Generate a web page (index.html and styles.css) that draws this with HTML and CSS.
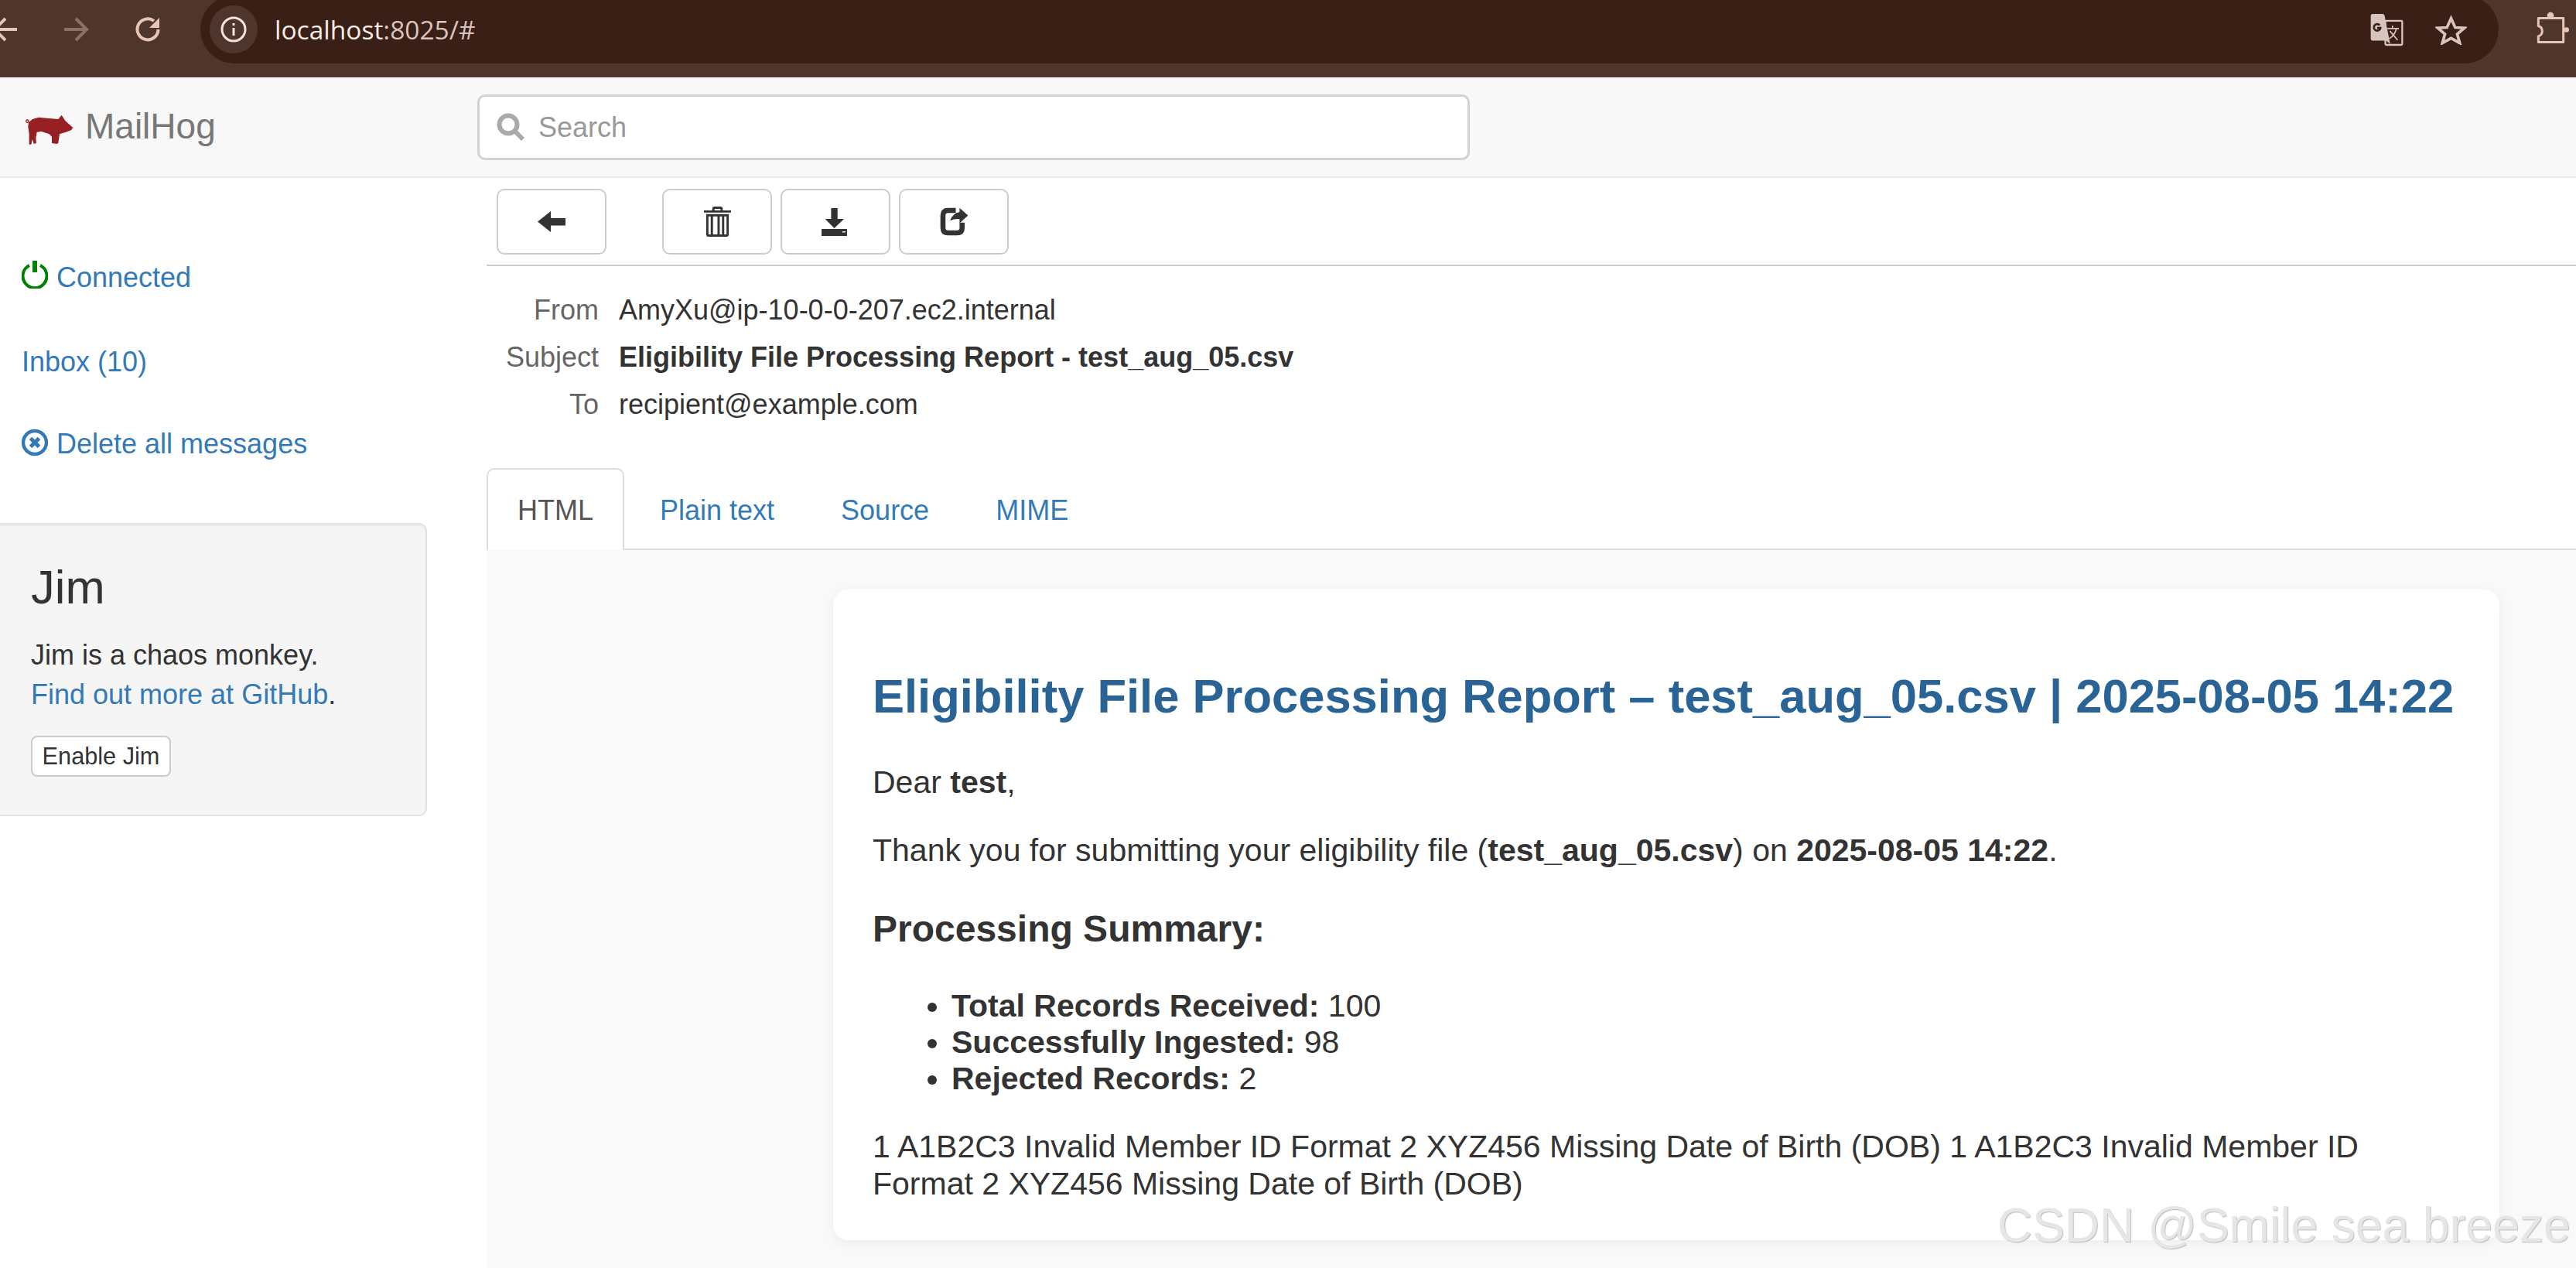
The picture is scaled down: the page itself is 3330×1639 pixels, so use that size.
FILE: index.html
```html
<!DOCTYPE html>
<html lang="en">
<head>
<meta charset="utf-8">
<title>MailHog</title>
<link rel="stylesheet" href="styles.css">
</head>
<body>
<header class="chrome">
  <svg class="nav-icon back" viewBox="0 0 32 32"><path d="M32 16H3M17 2 3 16l14 14"/></svg>
  <svg class="nav-icon fwd" viewBox="0 0 32 32"><path d="M0 16h29M15 2l14 14-14 14"/></svg>
  <svg class="nav-icon reload" viewBox="0 0 32 32"><path d="M29.500 16A13.500 13.500 0 1 1 24 5"/><path class="solid" d="M31 1v13H18z"/></svg>
  <div class="omnibox">
    <span class="site-pill"><svg class="info" viewBox="0 0 34 34"><circle cx="17" cy="17" r="15"/><path d="M17 15v10M17 9v3"/></svg></span>
    <span class="url">localhost<span class="url-dim">:8025/#</span></span>
    <svg class="translate" viewBox="48 36 130 128">
      <rect class="t-outline" x="107" y="65" width="66" height="94" rx="4"/>
      <path class="t-fill" d="M58 38h38q6 0 8 6l22 112-16-14H58q-8 0-8-8V46q0-8 8-8z"/>
      <path class="t-g" d="M85 82a13 13 0 1 0 3 11H75"/>
      <path class="t-x" d="M115 95h45M135 84v11M150 97c-5 18-14 30-28 38M125 105l30 35"/>
    </svg>
    <svg class="star" viewBox="298 40 122 118"><path d="M359 54l16 36 36 2-28 24 10 35-34-19-34 19 10-35-28-24 36-2z"/></svg>
  </div>
  <svg class="puzzle" viewBox="685 30 132 128">
    <path class="puzzle-body" d="M695 55H792V148H695V125C715 118 715 92 695 85Z"/>
    <circle cx="742" cy="45" r="13"/>
    <circle cx="804" cy="100" r="10"/>
  </svg>
</header>
<nav class="navbar">
  <a class="brand">
    <svg class="pig" viewBox="38 24 186 120"><circle class="pig-tail" cx="45" cy="50" r="5"/><path d="M50 55 65 42l25-7 30 3 45 4 13-16 14 22 13 12 17 15-7 10-20 7-25 8-5 35-7 3-18-3v-25l-10-10-30-10-18 2-4 23 2 20-10 3-5-18-5 20h-8v-40l-4-30z"/></svg>
    <span>MailHog</span>
  </a>
  <div class="search">
    <svg class="search-icon" viewBox="0 0 38 38"><circle cx="15" cy="15" r="11.500"/><path d="M23 23l11 11"/></svg>
    <span class="placeholder">Search</span>
  </div>
</nav>
<main class="layout">
  <aside class="sidebar">
    <a class="side-link side-first">
      <svg class="side-icon power" viewBox="0 0 34 36"><path d="M10 6A15.500 15.500 0 1 0 24 6"/><path d="M17 0v15" class="power-bar"/></svg>Connected
    </a>
    <a class="side-link side-inbox">Inbox (10)</a>
    <a class="side-link side-delete">
      <svg class="side-icon remove" viewBox="0 0 34 36"><circle cx="17" cy="18" r="15"/><path d="M11.500 12.500l11 11M22.500 12.500l-11 11"/></svg>Delete all messages
    </a>
    <section class="jim">
      <h3>Jim</h3>
      <p>Jim is a chaos monkey.<br><a>Find out more at GitHub</a>.</p>
      <button class="jim-btn">Enable Jim</button>
    </section>
  </aside>
  <section class="content">
    <div class="toolbar">
      <button class="tool tool-back"><svg class="ico-back" viewBox="0 0 36 27"><path d="M0 13.500 17 0v9h19v9.500H17V27z"/></svg></button>
      <button class="tool"><svg class="ico-trash" viewBox="0 0 36 40"><path fill-rule="evenodd" d="M11 5V3q0-3 3-3h8q3 0 3 3v2h11v3H0V5zm3-2v2h8V3zM3 10h30v27q0 3-3 3H6q-3 0-3-3zm3 3v24h3V13zm6 0v24h3V13zm9 0v24h3V13zm6 0v24h3V13zm-12 0v24h3V13z"/></svg></button>
      <button class="tool"><svg class="ico-download" viewBox="0 0 33 36"><path fill-rule="evenodd" d="M12.400 0h8.300v14H29L16.500 26 4.600 14h7.800zM0 27h33v9H0zm27 3v1.500h4V30z"/></svg></button>
      <button class="tool"><svg class="ico-share" viewBox="68 40 112 112"><path class="share-box" d="M130 52H100Q80 52 80 72V120Q80 140 100 140H135Q155 140 155 120V100"/><path d="M145 42 178 72 145 102V86Q125 84 108 92 118 62 145 58Z"/></svg></button>
    </div>
    <dl class="meta">
      <div class="meta-row"><dt>From</dt><dd>AmyXu@ip-10-0-0-207.ec2.internal</dd></div>
      <div class="meta-row"><dt>Subject</dt><dd class="strong">Eligibility File Processing Report - test_aug_05.csv</dd></div>
      <div class="meta-row"><dt>To</dt><dd>recipient@example.com</dd></div>
    </dl>
    <ul class="tabs">
      <li class="tab active">HTML</li>
      <li class="tab">Plain text</li>
      <li class="tab">Source</li>
      <li class="tab">MIME</li>
    </ul>
    <div class="preview">
      <article class="card">
        <h1>Eligibility File Processing Report – test_aug_05.csv | 2025-08-05 14:22</h1>
        <p>Dear <b>test</b>,</p>
        <p>Thank you for submitting your eligibility file (<b>test_aug_05.csv</b>) on <b>2025-08-05 14:22</b>.</p>
        <h2>Processing Summary:</h2>
        <ul class="summary">
          <li><b>Total Records Received:</b> 100</li>
          <li><b>Successfully Ingested:</b> 98</li>
          <li><b>Rejected Records:</b> 2</li>
        </ul>
        <p class="rows">1 A1B2C3 Invalid Member ID Format 2 XYZ456 Missing Date of Birth (DOB) 1 A1B2C3 Invalid Member ID Format 2 XYZ456 Missing Date of Birth (DOB)</p>
      </article>
    </div>
  </section>
</main>
<div class="watermark">CSDN @Smile sea breeze</div>
</body>
</html>
```
FILE: styles.css
```css
* { box-sizing: border-box; }
html, body { margin: 0; height: 100%; overflow: hidden; }
body {
  position: relative;
  width: 3330px;
  height: 1639px;
  background: #fff;
  color: #333;
  font-family: "Liberation Sans", Arial, sans-serif;
  font-size: 36px;
  line-height: 51px;
  display: flex;
  flex-direction: column;
}
a { color: #337ab7; text-decoration: none; }

/* browser chrome */
.chrome {
  height: 100px;
  flex: none;
  background: #4f362c;
  display: flex;
  align-items: flex-start;
  overflow: hidden;
}
.nav-icon { flex: none; width: 32px; height: 32px; margin-top: 22px; fill: none; stroke: #e9c5b6; stroke-width: 4; }
.nav-icon .solid { fill: #e9c5b6; stroke: none; }
.back { margin-left: -10px; }
.fwd { margin-left: 61px; stroke: #8c7166; }
.reload { margin-left: 60px; }
.omnibox {
  flex: none;
  width: 2971px;
  height: 88px;
  margin: -6px 0 0 52px;
  background: #3a1f16;
  border-radius: 44px;
  display: flex;
  align-items: center;
  padding-left: 12px;
}
.site-pill {
  width: 62px;
  height: 62px;
  border-radius: 50%;
  background: #4f362c;
  display: flex;
  align-items: center;
  justify-content: center;
  flex: none;
}
.info { width: 34px; height: 34px; fill: none; stroke: #f3e4de; stroke-width: 3; }
.url {
  font-family: "Open Sans", "Noto Sans", sans-serif;
  font-size: 33.500px;
  line-height: 40px;
  color: #f6ebe6;
  margin-left: 22px;
}
.url-dim { color: #d8c5bd; }
.translate { width: 43px; height: 43px; margin-left: auto; flex: none; }
.t-outline { fill: none; stroke: #d7c4be; stroke-width: 7; }
.t-fill { fill: #d7c4be; }
.t-g { fill: none; stroke: #3a1f16; stroke-width: 8; }
.t-x { fill: none; stroke: #d7c4be; stroke-width: 5; }
.star { width: 41px; height: 39px; margin: 0 41px; fill: none; stroke: #d7c4be; stroke-width: 11; flex: none; }
.puzzle { width: 44px; height: 43px; margin: 15px 0 0 48px; flex: none; fill: #e9c5b6; }
.puzzle-body { fill: none; stroke: #e9c5b6; stroke-width: 9; stroke-linejoin: round; }

/* navbar */
.navbar {
  height: 130px;
  flex: none;
  background: #f8f8f8;
  border-bottom: 2px solid #e7e7e7;
  display: flex;
  align-items: flex-start;
}
.brand {
  width: 617px;
  flex: none;
  display: flex;
  align-items: center;
  padding-left: 33px;
  padding-top: 31px;
  color: #777;
  font-size: 46px;
  line-height: 64px;
}
.pig { width: 62px; height: 40px; fill: #962024; margin-right: 15px; margin-top: 10px; }
.pig-tail { fill: none; stroke: #962024; stroke-width: 4; }
.search {
  width: 1283px;
  height: 85px;
  margin-top: 22px;
  background: #fff;
  border: 3px solid #d2d2d2;
  border-radius: 10px;
  display: flex;
  align-items: center;
  padding-left: 22px;
}
.search-icon { width: 38px; height: 38px; fill: none; stroke: #aaa; stroke-width: 6; }
.placeholder { color: #999; margin-left: 16px; }

/* layout */
.layout { flex: 1; display: flex; min-height: 0; }
.sidebar { width: 629px; flex: none; }
.side-link { display: flex; align-items: center; height: 51px; padding-left: 28px; }
.side-first { margin-top: 103px; }
.side-inbox { margin-top: 58px; }
.side-delete { margin-top: 55px; }
.side-icon { flex: none; width: 34px; height: 36px; margin-right: 11px; fill: none; stroke-width: 4; }
.power { stroke: #008000; margin-bottom: 7px; }
.power-bar { stroke-width: 6; }
.remove { stroke: #337ab7; margin-bottom: 4px; stroke-width: 4.500; }
.remove path { stroke-width: 5; }
.jim {
  width: 560px;
  height: 379px;
  margin: 77px 0 0 -8px;
  padding: 0 0 0 46px;
  background: #f5f5f5;
  border: 2px solid #e3e3e3;
  border-radius: 10px;
  box-shadow: inset 0 2px 2px rgba(0, 0, 0, .05);
}
.jim h3 { font-size: 61.500px; font-weight: 400; line-height: 68px; margin: 47px 0 0; }
.jim p { margin: 28px 0 0; }
.jim-btn {
  display: block;
  width: 181px;
  height: 53px;
  margin: 28px 0 0;
  padding: 0;
  background: #fff;
  border: 2px solid #ccc;
  border-radius: 8px;
  font: 30.700px "Liberation Sans", Arial, sans-serif;
  color: #333;
}

/* content */
.content { flex: 1; min-width: 0; display: flex; flex-direction: column; }
.toolbar {
  height: 114px;
  flex: none;
  border-bottom: 2px solid #ccc;
  padding: 14px 0 0 13px;
  display: flex;
  align-items: flex-start;
  gap: 11px;
}
.tool {
  width: 142px;
  height: 85px;
  padding: 0;
  background: #fff;
  border: 2px solid #ccc;
  border-radius: 10px;
  display: flex;
  align-items: center;
  justify-content: center;
}
.tool svg { fill: #333; flex: none; }
.ico-back { width: 36px; height: 27px; }
.ico-trash { width: 35px; height: 39px; }
.ico-download { width: 33px; height: 36px; margin-right: 3px; }
.ico-share { width: 37px; height: 37px; }
.share-box { fill: none; stroke: #333; stroke-width: 20; }
.tool-back { margin-right: 61px; }
.meta { margin: 26px 0 0; flex: none; }
.meta-row { display: flex; height: 61px; align-items: center; }
.meta-row dt { width: 145px; text-align: right; color: #666; font-weight: 400; }
.meta-row dd { margin: 0 0 0 26px; }
.strong { font-weight: 700; }
.tabs {
  list-style: none;
  flex: none;
  height: 106px;
  margin: 52px 0 0;
  padding: 0;
  display: flex;
  border-bottom: 2px solid #ddd;
}
.tab { padding: 0 41px; height: 106px; line-height: 106px; color: #337ab7; border: 2px solid transparent; border-bottom: 0; }
.tab.active { color: #555; background: #fff; border-color: #ddd; border-radius: 10px 10px 0 0; width: 178px; padding: 0; text-align: center; margin-right: 3px; }
.preview {
  flex: 1;
  min-height: 0;
  background: #f9f9f9;
  padding: 51px 0 0 448px;
  overflow: hidden;
}
.card {
  width: 2154px;
  height: 841px;
  background: #fff;
  border-radius: 20px;
  box-shadow: 0 4px 16px rgba(0, 0, 0, .05);
  padding: 101px 51px 0;
  font-size: 41px;
  line-height: 49px;
}
.card h1 { margin: 0; font-size: 61.500px; line-height: 74px; color: #2a6496; font-weight: 700; white-space: nowrap; }
.card p { margin: 0; }
.card h1 + p { margin-top: 50px; }
.card p + p { margin-top: 39px; }
.card h2 { margin: 49px 0 0; font-size: 48px; line-height: 56px; font-weight: 700; }
.summary { margin: 48px 0 0; padding: 0 0 0 102px; line-height: 47px; }
.card .rows { margin-top: 40px; line-height: 48px; }

/* watermark */
.watermark {
  position: absolute;
  left: 2582px;
  top: 1546px;
  font-size: 62.500px;
  line-height: 74px;
  white-space: nowrap;
  color: #e6e6e6;
  text-shadow: 1px 1px 1px #bbb;
}
```
